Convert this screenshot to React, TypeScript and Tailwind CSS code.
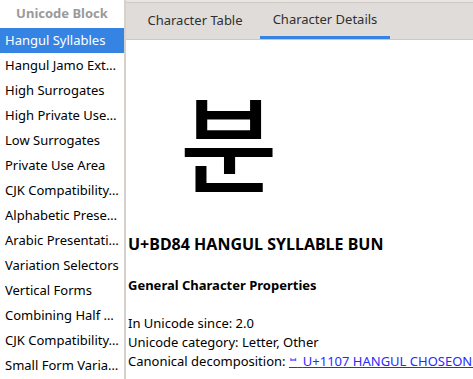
const BLOCKS = [
  'Hangul Syllables',
  'Hangul Jamo Ext…',
  'High Surrogates',
  'High Private Use…',
  'Low Surrogates',
  'Private Use Area',
  'CJK Compatibility…',
  'Alphabetic Prese…',
  'Arabic Presentati…',
  'Variation Selectors',
  'Vertical Forms',
  'Combining Half …',
  'CJK Compatibility…',
  'Small Form Varia…',
];

export default function App() {
  return (
    <div
      className="flex w-[473px] h-[379px] overflow-hidden bg-[#d6d1cd] text-[13px] text-black"
      style={{ fontFamily: '"Noto Sans", "Noto Sans CJK KR", sans-serif' }}
    >
      {/* block list */}
      <div className="w-[124px] shrink-0 bg-white flex flex-col">
        <div className="h-[28px] flex items-center justify-center font-bold text-[#9a9a9a]">
          Unicode Block
        </div>
        {BLOCKS.map((name, i) => (
          <div
            key={i}
            className={
              i === 0
                ? 'h-[25px] shrink-0 flex items-center pl-[5px] bg-[#3584e4] text-white whitespace-nowrap'
                : 'h-[25px] shrink-0 flex items-center pl-[5px] whitespace-nowrap'
            }
          >
            {name}
          </div>
        ))}
      </div>

      {/* details pane */}
      <div className="ml-[2px] flex-1 flex flex-col min-w-0">
        <div className="h-[2px] bg-[#e8e5e3]" />
        <div className="h-[38px] shrink-0 flex items-stretch bg-[#e0dcd9] border-t border-[#cdc8c4] border-b border-[#c7c2be] text-[#303030]">
          <div className="w-[134px] flex items-center justify-center pl-[4px]">Character Table</div>
          <div className="w-[130px] flex flex-col">
            <div className="flex-1 flex items-center justify-center">Character Details</div>
            <div className="h-[3px] bg-[#3584e4]" />
          </div>
        </div>
        <div className="flex-1 bg-white pl-[2px] whitespace-nowrap overflow-hidden">
          <div className="h-[193px] flex items-center pl-[52px] pt-[4px]">
            <span
              className="text-[106px] leading-none font-medium"
              style={{ fontFamily: '"Noto Sans CJK KR", sans-serif' }}
            >
              분
            </span>
          </div>
          <div className="text-[16px] font-bold leading-[22px]">U+BD84 HANGUL SYLLABLE BUN</div>
          <div className="mt-[20px] font-bold leading-[20px]">General Character Properties</div>
          <div className="mt-[19px] leading-[19px]">
            <div>In Unicode since: 2.0</div>
            <div>Unicode category: Letter, Other</div>
            <div>
              Canonical decomposition:{' '}
              <a className="text-[#2a2aff] underline" href="#">
                <span className="text-[9px] align-top">ᄇ</span>{'\u00a0\u2009'}U+1107 HANGUL CHOSEONG PIEUP
              </a>
            </div>
          </div>
        </div>
      </div>
    </div>
  );
}
